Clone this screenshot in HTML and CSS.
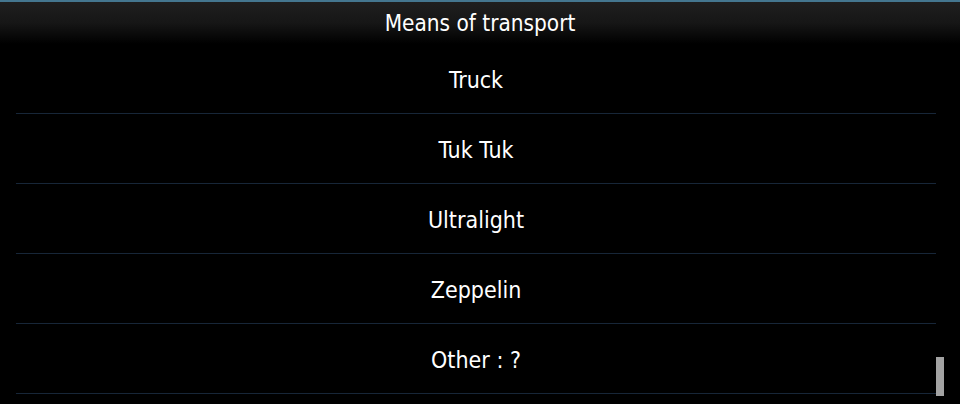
FILE: index.html
```html
<!DOCTYPE html>
<html>
<head>
<meta charset="utf-8">
<link rel="stylesheet" href="styles.css">
</head>
<body>
<div class="screen">
  <div class="header"><span class="title">Means of transport</span></div>
  <ul class="list">
    <li class="item">Truck</li>
    <li class="item">Tuk Tuk</li>
    <li class="item">Ultralight</li>
    <li class="item">Zeppelin</li>
    <li class="item">Other : ?</li>
  </ul>
  <div class="scrollbar"></div>
</div>
</body>
</html>
```
FILE: styles.css
```css
html, body {
  margin: 0;
  padding: 0;
  background: #000;
}
.screen {
  position: relative;
  width: 960px;
  height: 404px;
  overflow: hidden;
  background: #000;
  font-family: "DejaVu Sans Condensed", "DejaVu Sans", sans-serif;
  font-stretch: condensed;
  color: #fff;
}
.header {
  height: 42px;
  border-top: 2px solid #44768f;
  background: linear-gradient(to bottom, #1f1f1f 0%, #161616 50%, #000 100%);
  display: flex;
  justify-content: center;
  align-items: center;
}
.title {
  font-size: 22.4px;
  line-height: 1;
}
.list {
  list-style: none;
  margin: 0;
  padding: 0 24px 0 16px;
}
.item {
  box-sizing: border-box;
  height: 70px;
  border-bottom: 1px solid #172638;
  display: flex;
  justify-content: center;
  align-items: center;
  font-size: 23px;
  line-height: 1;
  padding-top: 4px;
}
.scrollbar {
  position: absolute;
  left: 936px;
  top: 357px;
  width: 8px;
  height: 39px;
  background: #a3a3a3;
}
```
